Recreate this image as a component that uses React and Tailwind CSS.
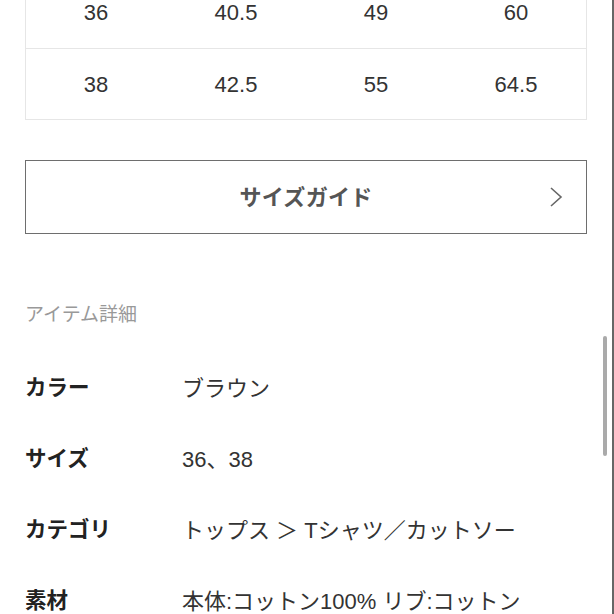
const rows = [
  ['36', '40.5', '49', '60'],
  ['38', '42.5', '55', '64.5'],
]

const details = [
  { label: 'カラー', value: 'ブラウン' },
  { label: 'サイズ', value: '36、38' },
  { label: 'カテゴリ', value: 'トップス ＞ Tシャツ／カットソー' },
  { label: '素材', value: '本体:コットン100% リブ:コットン' },
]

const SizeTable = () => (
  <div className="-mt-[24px] border border-[#e6e6e6]">
    {rows.map((r, i) => (
      <div key={i} className={`grid grid-cols-4 h-[71px] items-center ${i > 0 ? 'border-t border-[#e6e6e6]' : ''}`}>
        {r.map((v, j) => (
          <div key={j} className="text-center text-[22px] text-[#333]">{v}</div>
        ))}
      </div>
    ))}
  </div>
)

const App = () => {
  return (
    <div className="relative w-[614px] h-[614px] overflow-hidden bg-white flex" style={{ fontFamily: '"Liberation Sans", "Noto Sans CJK JP", sans-serif' }}>
      <div className="flex-1 px-[25px]">
        <SizeTable />

        <button className="mt-[40px] w-full h-[74px] border border-[#6e6e6e] flex items-center justify-center relative bg-white">
          <span className="text-[22px] font-bold text-[#555] tracking-[0.3px]">サイズガイド</span>
          <svg className="absolute right-[23px] top-1/2 -translate-y-1/2" width="14" height="22" viewBox="0 0 14 22" fill="none">
            <path d="M2 2 L12 11 L2 20" stroke="#666" strokeWidth="1.6" />
          </svg>
        </button>

        <div className="mt-[61px] h-[40px] flex items-center text-[19px] text-[#999]">アイテム詳細</div>

        <div className="mt-[18px]">
          {details.map((d) => (
            <div key={d.label} className="h-[71px] flex items-center">
              <div className="w-[157px] text-[21.5px] font-bold text-[#222]">{d.label}</div>
              <div className="text-[22px] text-[#333] whitespace-nowrap">{d.value}</div>
            </div>
          ))}
        </div>
      </div>
      <div className="w-[2px] bg-[#666]"></div>

      {/* scroll thumb */}
      <div className="absolute left-[603px] top-[336px] w-[4px] h-[120px] rounded-full bg-[#aaa]"></div>
    </div>
  )
}

export default App
